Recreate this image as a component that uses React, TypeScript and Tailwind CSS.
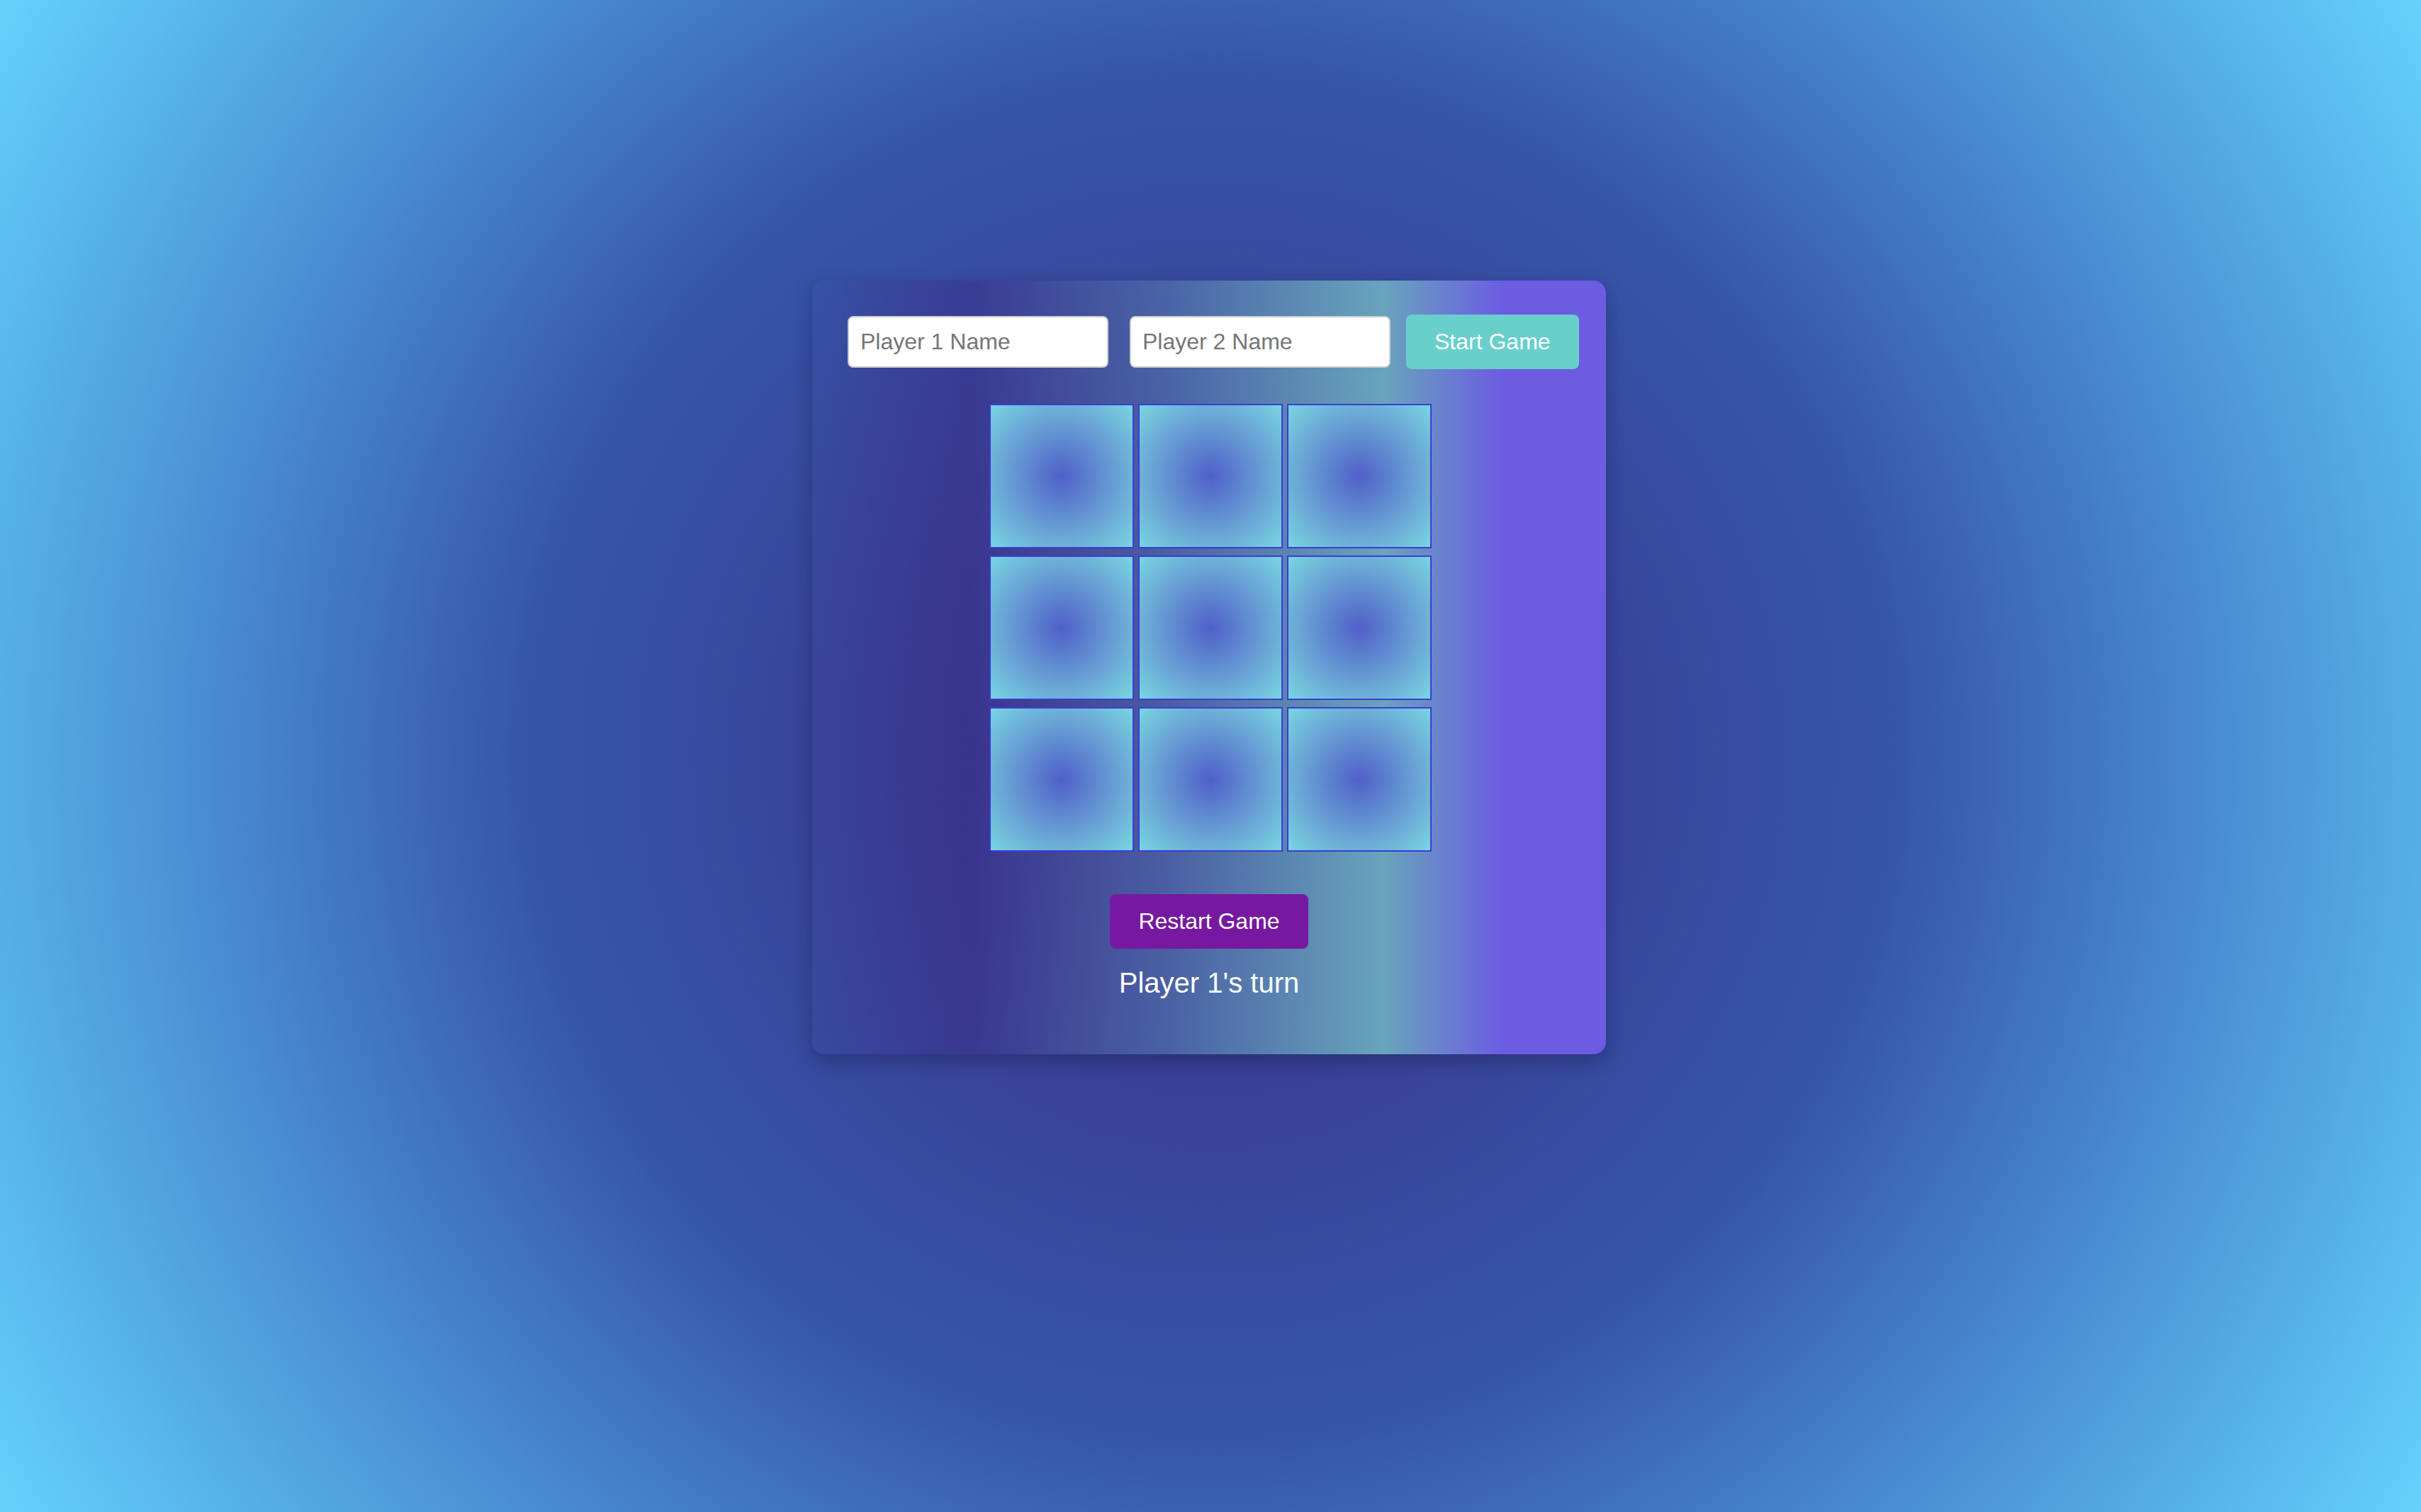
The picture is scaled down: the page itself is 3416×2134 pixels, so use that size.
import { useState } from "react";

const font = { fontFamily: '"Liberation Sans", Arial, sans-serif' };

export default function App() {
  const [p1, setP1] = useState("");
  const [p2, setP2] = useState("");
  const cells = Array.from({ length: 9 });

  return (
    <div
      className="flex h-screen w-full justify-center bg-[radial-gradient(circle,#3a2d88_0%,#3656a8_48%,#4a90d4_72%,#64d2fd_100%)] pt-[396px] pr-[4px] leading-[1.15]"
      style={font}
    >
      <div className="flex h-fit w-[1120px] flex-col items-center rounded-[18px] bg-[linear-gradient(90deg,rgba(58,45,136,0)_0%,rgba(58,45,136,0.5)_20%,rgba(80,110,170,0.75)_45%,#68a4bc_72%,#6c5ce2_87%,#6c5ce2_100%)] p-[40px] shadow-[0_10px_24px_rgba(20,20,60,0.35)]">
        {/* player inputs */}
        <div className="mt-[8px] flex w-full items-center">
          <input
            value={p1}
            onChange={(e) => setP1(e.target.value)}
            placeholder="Player 1 Name"
            className="ml-[10px] w-[368px] shrink-0 rounded-[8px] border-2 border-[#cccccc] bg-white px-[16px] py-[16px] text-[32px] leading-[1.15] text-[#333] placeholder:text-[#757575] outline-none"
          />
          <input
            value={p2}
            onChange={(e) => setP2(e.target.value)}
            placeholder="Player 2 Name"
            className="ml-[30px] w-[368px] shrink-0 rounded-[8px] border-2 border-[#cccccc] bg-white px-[16px] py-[16px] text-[32px] leading-[1.15] text-[#333] placeholder:text-[#757575] outline-none"
          />
          <button className="ml-[22px] shrink-0 whitespace-nowrap rounded-[8px] bg-[#68cfcb] px-[40px] py-[20px] text-[32px] leading-[1.15] text-white">
            Start Game
          </button>
        </div>

        {/* board */}
        <div className="mt-[49px] ml-[4px] grid grid-cols-[repeat(3,204px)] gap-x-[6px] gap-y-[10px]">
          {cells.map((_, i) => (
            <div
              key={i}
              className="h-[204px] w-[204px] border-2 border-[#3d3bd6] bg-[radial-gradient(circle,#5060c8_0%,#6aa6d6_60%,#78d6e0_100%)]"
            />
          ))}
        </div>

        <button className="mt-[60px] whitespace-nowrap rounded-[8px] bg-[#7619a0] px-[40px] py-[20px] text-[32px] leading-[1.15] text-white">
          Restart Game
        </button>
        <p className="mt-[25px] mb-[38px] text-[40px] leading-[1.15] text-white">Player 1's turn</p>
      </div>
    </div>
  );
}
